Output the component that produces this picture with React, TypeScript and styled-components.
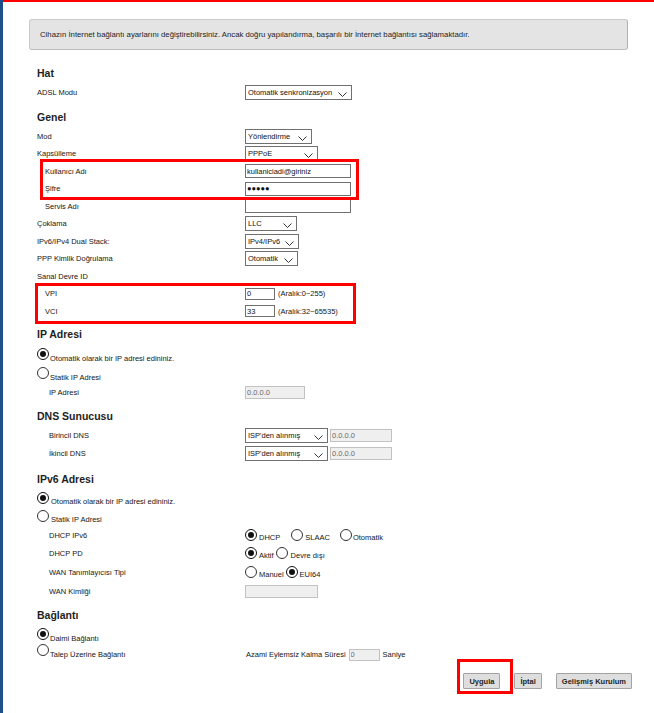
import styled, { createGlobalStyle } from "styled-components";

const GlobalStyle = createGlobalStyle`
  html, body {
    margin: 0;
    padding: 0;
    background: #fff;
  }
  body {
    font-family: "Liberation Sans", Arial, sans-serif;
  }
`;

const FONT = `"Liberation Sans", Arial, sans-serif`;

const Shell = styled.div`
  position: relative;
  min-height: 713px;
  box-sizing: border-box;
  border-left: 3px solid #1d4f8b;
  color: #161616;
  font-size: 7.5px;
`;

const TopLine = styled.div`
  height: 2px;
  background: #ff0000;
`;

const Notice = styled.div`
  margin: 17px 26px 0 26px;
  height: 31px;
  box-sizing: border-box;
  padding-left: 10px;
  display: flex;
  align-items: center;
  background: #e4e4e4;
  border: 1px solid #cacaca;
  border-right-color: #b2b2b2;
  border-bottom-color: #bcbcbc;
  border-radius: 3px;
  color: #1e1e1e;
  font-size: 7.75px;
`;

const Form = styled.div`
  padding-left: 34px;
`;

const Heading = styled.div<{ $mt: number }>`
  margin-top: ${(p) => p.$mt}px;
  height: 21px;
  line-height: 21px;
  font-size: 10.5px;
  font-weight: 700;
  color: #1e1e1e;
`;

const Row = styled.div<{ $h?: number }>`
  display: flex;
  align-items: center;
  height: ${(p) => p.$h ?? 17.5}px;
`;

const Label = styled.div<{ $indent?: number }>`
  box-sizing: border-box;
  width: 208px;
  flex: none;
  padding-left: ${(p) => p.$indent ?? 0}px;
`;

const Controls = styled.div`
  display: flex;
  align-items: center;
  gap: 2px;
`;

const Hint = styled.span`
  margin-left: 1px;
`;

const Field = styled.input<{ $w: number; $h?: number; $off?: boolean }>`
  box-sizing: border-box;
  width: ${(p) => p.$w}px;
  height: ${(p) => p.$h ?? 14}px;
  margin: 0;
  padding: 0 1px;
  border: 1px solid ${(p) => (p.$off ? "#c2c2c2" : "#707070")};
  background: ${(p) => (p.$off ? "#efefef" : "#fff")};
  color: ${(p) => (p.$off ? "#6a6a6a" : "#111")};
  font: 7.5px ${FONT};
  outline: none;
`;

const SelectBox = styled.div<{ $w: number }>`
  box-sizing: border-box;
  width: ${(p) => p.$w}px;
  height: 15px;
  display: flex;
  align-items: center;
  padding-left: 2px;
  border: 1px solid #707070;
  background: #fff;
  color: #111;
`;

const Chevron = styled.svg`
  flex: none;
  width: 9px;
  height: 5px;
  margin-left: auto;
  margin-right: 4px;
  margin-bottom: 2px;
  align-self: flex-end;
`;

const Option = styled.span<{ $gap?: number; $drop?: number }>`
  display: inline-flex;
  align-items: flex-end;
  margin-right: ${(p) => p.$gap ?? 0}px;
  white-space: nowrap;
  color: #161616;

  span.text {
    line-height: 9px;
    margin-bottom: -${(p) => p.$drop ?? 1}px;
  }
`;

const Dot = styled.span<{ $on?: boolean; $space?: number }>`
  box-sizing: border-box;
  flex: none;
  width: 12px;
  height: 12px;
  margin-right: ${(p) => p.$space ?? 1}px;
  border-radius: 50%;
  border: 1px solid ${(p) => (p.$on ? "#111" : "#333")};
  background: #fff;
  display: flex;
  align-items: center;
  justify-content: center;

  &::after {
    content: "";
    display: ${(p) => (p.$on ? "block" : "none")};
    width: 6px;
    height: 6px;
    border-radius: 50%;
    background: #111;
  }
`;

const IdleGroup = styled.div`
  display: flex;
  align-items: center;
  gap: 3px;
  margin-left: 1px;
  margin-top: 7px;
`;

const Actions = styled.div`
  display: flex;
  justify-content: flex-end;
  gap: 14px;
  margin-top: 12.5px;
  padding-right: 22px;
`;

const Button = styled.button`
  height: 16px;
  margin: 0;
  padding: 0 5px;
  border: 1px solid #a3a3a3;
  border-radius: 1px;
  background: #dedede;
  color: #1e1e1e;
  font: 700 7.5px ${FONT};
`;

// red highlight frames drawn over the form
const Mark = styled.div<{ $x: number; $y: number; $w: number; $h: number }>`
  position: absolute;
  left: ${(p) => p.$x - 3}px;
  top: ${(p) => p.$y}px;
  width: ${(p) => p.$w}px;
  height: ${(p) => p.$h}px;
  box-sizing: border-box;
  border: 3px solid #fe0000;
  pointer-events: none;
`;

function Select({ w, children }: { w: number; children: string }) {
  return (
    <SelectBox $w={w}>
      <span>{children}</span>
      <Chevron viewBox="0 0 9 5">
        <polyline points="0.5,0.5 4.5,4.5 8.5,0.5" fill="none" stroke="#333" strokeWidth="1" />
      </Chevron>
    </SelectBox>
  );
}

function Radio({
  on,
  text,
  gap,
  drop,
  space,
}: {
  on?: boolean;
  text: string;
  gap?: number;
  drop?: number;
  space?: number;
}) {
  return (
    <Option $gap={gap} $drop={drop}>
      <Dot $on={on} $space={space} />
      <span className="text">{text}</span>
    </Option>
  );
}

export default function App() {
  return (
    <Shell>
      <GlobalStyle />
      <TopLine />
      <Notice>
        Cihazın İnternet bağlantı ayarlarını değiştirebilirsiniz. Ancak doğru yapılandırma, başarılı bir İnternet bağlantısı sağlamaktadır.
      </Notice>

      <Form>
        <Heading $mt={13}>Hat</Heading>
        <Row>
          <Label>ADSL Modu</Label>
          <Select w={107}>Otomatik senkronizasyon</Select>
        </Row>

        <Heading $mt={5}>Genel</Heading>
        <Row>
          <Label>Mod</Label>
          <Select w={67}>Yönlendirme</Select>
        </Row>
        <Row>
          <Label>Kapsülleme</Label>
          <Select w={73}>PPPoE</Select>
        </Row>
        <Row>
          <Label $indent={8}>Kullanıcı Adı</Label>
          <Field $w={106} defaultValue="kullaniciadi@giriniz" />
        </Row>
        <Row>
          <Label $indent={8}>Şifre</Label>
          <Field $w={106} defaultValue="●●●●●" />
        </Row>
        <Row>
          <Label $indent={8}>Servis Adı</Label>
          <Field $w={106} />
        </Row>
        <Row>
          <Label>Çoklama</Label>
          <Select w={52}>LLC</Select>
        </Row>
        <Row>
          <Label>IPv6/IPv4 Dual Stack:</Label>
          <Select w={54}>IPv4/IPv6</Select>
        </Row>
        <Row>
          <Label>PPP Kimlik Doğrulama</Label>
          <Select w={53}>Otomatik</Select>
        </Row>
        <Row>
          <Label>Sanal Devre ID</Label>
        </Row>
        <Row>
          <Label $indent={8}>VPI</Label>
          <Controls>
            <Field $w={30} $h={12} defaultValue="0" />
            <Hint>(Aralık:0~255)</Hint>
          </Controls>
        </Row>
        <Row>
          <Label $indent={8}>VCI</Label>
          <Controls>
            <Field $w={30} $h={12} defaultValue="33" />
            <Hint>(Aralık:32~65535)</Hint>
          </Controls>
        </Row>

        <Heading $mt={4}>IP Adresi</Heading>
        <Row $h={17.5}>
          <Radio on text="Otomatik olarak bir IP adresi edininiz." drop={3} />
        </Row>
        <Row $h={21}>
          <Radio text="Statik IP Adresi" drop={3} />
        </Row>
        <Row>
          <Label $indent={12}>IP Adresi</Label>
          <Field $w={60} $h={13} $off defaultValue="0.0.0.0" />
        </Row>

        <Heading $mt={5}>DNS Sunucusu</Heading>
        <Row>
          <Label $indent={12}>Birincil DNS</Label>
          <Controls>
            <Select w={83}>ISP'den alınmış</Select>
            <Field $w={62} $h={13} $off defaultValue="0.0.0.0" />
          </Controls>
        </Row>
        <Row>
          <Label $indent={12}>İkincil DNS</Label>
          <Controls>
            <Select w={83}>ISP'den alınmış</Select>
            <Field $w={62} $h={13} $off defaultValue="0.0.0.0" />
          </Controls>
        </Row>

        <Heading $mt={6.5}>IPv6 Adresi</Heading>
        <Row $h={17}>
          <Radio on text="Otomatik olarak bir IP adresi edininiz." drop={2} space={2} />
        </Row>
        <Row $h={19.5}>
          <Radio text="Statik IP Adresi" drop={2} space={2} />
        </Row>
        <Row $h={18}>
          <Label $indent={12}>DHCP IPv6</Label>
          <Controls>
            <Radio on text="DHCP" gap={9} space={2} />
            <Radio text="SLAAC" gap={8} space={2} />
            <Radio text="Otomatik" space={1} />
          </Controls>
        </Row>
        <Row $h={18}>
          <Label $indent={12}>DHCP PD</Label>
          <Controls>
            <Radio on text="Aktif" gap={0} space={2} />
            <Radio text="Devre dışı" space={3} />
          </Controls>
        </Row>
        <Row $h={20}>
          <Label $indent={12}>WAN Tanımlayıcısı Tipi</Label>
          <Controls>
            <Radio text="Manuel" gap={0} space={2} />
            <Radio on text="EUI64" space={2} />
          </Controls>
        </Row>
        <Row $h={18}>
          <Label $indent={12}>WAN Kimliği</Label>
          <Field $w={73} $h={13} $off />
        </Row>

        <Heading $mt={4.5}>Bağlantı</Heading>
        <Row $h={16}>
          <Radio on text="Daimi Bağlantı" drop={3} />
        </Row>
        <Row $h={19}>
          <Label>
            <Radio text="Talep Üzerine Bağlantı" drop={3} />
          </Label>
          <IdleGroup>
            <span>Azami Eylemsiz Kalma Süresi</span>
            <Field $w={31} $h={12} $off defaultValue="0" />
            <span>Saniye</span>
          </IdleGroup>
        </Row>

        <Actions>
          <Button>Uygula</Button>
          <Button>İptal</Button>
          <Button>Gelişmiş Kurulum</Button>
        </Actions>
      </Form>

      <Mark $x={40} $y={159} $w={319} $h={41} />
      <Mark $x={35} $y={283} $w={321} $h={41} />
      <Mark $x={457} $y={659} $w={56} $h={35} />
    </Shell>
  );
}
